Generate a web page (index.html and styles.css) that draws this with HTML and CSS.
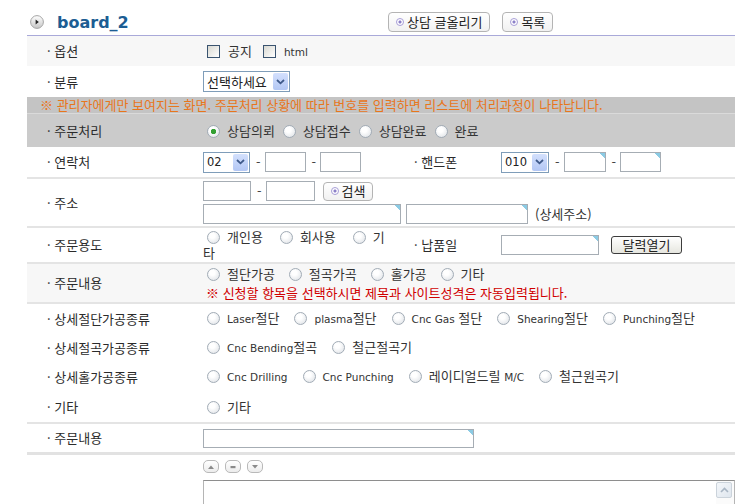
FILE: index.html
```html
<!DOCTYPE html>
<html lang="ko">
<head>
  <meta charset="UTF-8" />
  <title>board_2</title>
  <link rel="stylesheet" href="styles.css">
</head>
<body>
  <div class="board">
    <div class="board-head">
      <h1 class="board-title">
        <svg class="head-icon" width="14" height="14" viewBox="0 0 14 14">
          <defs>
            <linearGradient id="hg" x1="0" y1="0" x2="0" y2="1">
              <stop offset="0" stop-color="#ffffff" />
              <stop offset="1" stop-color="#c6c6c6" />
            </linearGradient>
          </defs>
          <circle cx="7" cy="7" r="6.4" fill="url(#hg)" stroke="#a5a5a5" />
          <path d="M5.6 4.6 L8.8 7 L5.6 9.4 Z" fill="#222" />
        </svg>
        <span class="title-text">board_2</span>
      </h1>
      <div class="head-btns">
        <a class="btn-round"><i class="ring"></i>상담 글올리기</a>
        <a class="btn-round"><i class="ring"></i>목록</a>
      </div>
    </div>

    <div class="row bg-light h30">
      <div class="th">· 옵션</div>
      <div class="td">
        <label class="chk"><input type="checkbox">공지</label>
        <label class="chk"><input type="checkbox"><span class="en">html</span></label>
      </div>
    </div>

    <div class="row h31">
      <div class="th">· 분류</div>
      <div class="td">
        <span class="sel w87"><select><option>선택하세요</option></select><span class="sel-arrow"><svg width="9" height="6" viewBox="0 0 9 6"><path d="M1 1 L4.5 4.3 L8 1" fill="none" stroke="#3f5a8a" stroke-width="1.8" /></svg></span></span>
      </div>
    </div>

    <div class="notice">※ 관리자에게만 보여지는 화면. 주문처리 상황에 따라 번호를 입력하면 리스트에 처리과정이 나타납니다.</div>

    <div class="row bg-dark h33">
      <div class="th">· 주문처리</div>
      <div class="td opts g-status">
        <label class="opt"><input type="radio" name="status" checked>상담의뢰</label><label class="opt"><input type="radio" name="status">상담접수</label><label class="opt"><input type="radio" name="status">상담완료</label><label class="opt"><input type="radio" name="status">완료</label>
      </div>
    </div>

    <div class="row split line h32">
      <div class="th">· 연락처</div>
      <div class="td">
        <span class="sel w47 en"><select><option>02</option></select><span class="sel-arrow"><svg width="9" height="6" viewBox="0 0 9 6"><path d="M1 1 L4.5 4.3 L8 1" fill="none" stroke="#3f5a8a" stroke-width="1.8" /></svg></span></span><span class="dash">-</span><input class="txt w41" type="text"><span class="dash">-</span><input class="txt w41" type="text">
      </div>
      <div class="th">· 핸드폰</div>
      <div class="td">
        <span class="sel w48 en"><select><option>010</option></select><span class="sel-arrow"><svg width="9" height="6" viewBox="0 0 9 6"><path d="M1 1 L4.5 4.3 L8 1" fill="none" stroke="#3f5a8a" stroke-width="1.8" /></svg></span></span><span class="dash">-</span><input class="txt ime w42" type="text"><span class="dash">-</span><input class="txt ime w41" type="text">
      </div>
    </div>

    <div class="row line h49">
      <div class="th">· 주소</div>
      <div class="td addr">
        <div class="addr-line">
          <input class="txt w48" type="text"><span class="dash">-</span><input class="txt w49" type="text">
          <a class="btn-round btn-search"><i class="ring"></i>검색</a>
        </div>
        <div class="addr-line">
          <input class="txt ime w198" type="text"><input class="txt ime w122 ml5" type="text"><span class="addr-note">(상세주소)</span>
        </div>
      </div>
    </div>

    <div class="row split line h36">
      <div class="th">· 주문용도</div>
      <div class="td opts g-usage lh16">
        <label class="opt"><input type="radio" name="usage">개인용</label><label class="opt"><input type="radio" name="usage">회사용</label><label class="opt"><input type="radio" name="usage">기<br>타</label>
      </div>
      <div class="th">· 납품일</div>
      <div class="td">
        <input class="txt ime w98" type="text"><button class="btn-xp" type="button">달력열기</button>
      </div>
    </div>

    <div class="row bg-light line h40">
      <div class="th">· 주문내용</div>
      <div class="td opts g-order lh19">
        <label class="opt"><input type="radio" name="kind">절단가공</label><label class="opt"><input type="radio" name="kind">절곡가곡</label><label class="opt"><input type="radio" name="kind">홀가공</label><label class="opt"><input type="radio" name="kind">기타</label>
        <p class="note-red">※ 신청할 항목을 선택하시면 제목과 사이트성격은 자동입력됩니다.</p>
      </div>
    </div>

    <div class="row h29">
      <div class="th">· 상세절단가공종류</div>
      <div class="td opts g-detail">
        <label class="opt"><input type="radio" name="cut"><span class="en">Laser</span>절단</label><label class="opt"><input type="radio" name="cut"><span class="en">plasma</span>절단</label><label class="opt"><input type="radio" name="cut"><span class="en">Cnc Gas</span> 절단</label><label class="opt"><input type="radio" name="cut"><span class="en">Shearing</span>절단</label><label class="opt"><input type="radio" name="cut"><span class="en">Punching</span>절단</label>
      </div>
    </div>

    <div class="row h29">
      <div class="th">· 상세절곡가공종류</div>
      <div class="td opts g-detail">
        <label class="opt"><input type="radio" name="bend"><span class="en">Cnc Bending</span>절곡</label><label class="opt"><input type="radio" name="bend">철근절곡기</label>
      </div>
    </div>

    <div class="row h29">
      <div class="th">· 상세홀가공종류</div>
      <div class="td opts g-detail">
        <label class="opt"><input type="radio" name="hole"><span class="en">Cnc Drilling</span></label><label class="opt"><input type="radio" name="hole"><span class="en">Cnc Punching</span></label><label class="opt"><input type="radio" name="hole">레이디얼드릴 <span class="en">M/C</span></label><label class="opt"><input type="radio" name="hole">철근원곡기</label>
      </div>
    </div>

    <div class="row line h33">
      <div class="th">· 기타</div>
      <div class="td opts">
        <label class="opt"><input type="radio" name="etc">기타</label>
      </div>
    </div>

    <div class="row line-thick h31">
      <div class="th">· 주문내용</div>
      <div class="td">
        <input class="txt ime w271 h19" type="text">
      </div>
    </div>

    <div class="row editor">
      <div class="th"></div>
      <div class="td">
        <div class="size-btns">
          <span class="size-btn"><svg width="8" height="6" viewBox="0 0 8 6"><path d="M1 5 L4 1.5 L7 5 Z" fill="#8a8a8a" /></svg></span>
          <span class="size-btn"><svg width="8" height="6" viewBox="0 0 8 6"><rect x="1.5" y="2" width="5" height="2.2" fill="#8a8a8a" /></svg></span>
          <span class="size-btn"><svg width="8" height="6" viewBox="0 0 8 6"><path d="M1 1 L4 4.5 L7 1 Z" fill="#8a8a8a" /></svg></span>
        </div>
        <div class="memo">
          <textarea></textarea>
          <div class="scroll">
            <span class="scroll-up"><svg width="9" height="6" viewBox="0 0 9 6"><path d="M1 5 L4.5 1.5 L8 5" fill="none" stroke="#a9b6c4" stroke-width="1.6" /></svg></span>
          </div>
        </div>
      </div>
    </div>
  </div>
</body>
</html>
```

FILE: styles.css
```css
body {
  margin: 0;
  font-family: 'Noto Sans CJK KR', 'Noto Sans', sans-serif;
  font-size: 13px;
  line-height: 16px;
  color: #333;
  background: #fff;
}
.en {
  font-family: 'DejaVu Sans', sans-serif;
  font-size: 10.5px;
}
.board {
  width: 708px;
  margin-left: 27px;
}
.board-head {
  display: flex;
  align-items: center;
  height: 36px;
  padding-top: 8px;
  box-sizing: border-box;
  border-bottom: 1px solid #a9a9d9;
}
.board-title {
  display: flex;
  align-items: center;
  width: 358px;
  margin: 0;
  padding-left: 3px;
  font-family: 'DejaVu Sans', sans-serif;
  font-size: 16px;
  font-weight: bold;
  color: #1c5d93;
}
.title-text {
  padding-top: 3px;
}
.head-icon {
  margin-right: 13px;
}
.head-btns {
  display: flex;
  gap: 12px;
}
.btn-round {
  display: inline-flex;
  align-items: center;
  gap: 3px;
  height: 20px;
  padding: 0 7px 0 7px;
  box-sizing: border-box;
  border: 1px solid #b4b4b4;
  border-radius: 4px;
  background: linear-gradient(#ffffff, #f1f1f1);
  color: #222;
  cursor: pointer;
}
.ring {
  width: 6px;
  height: 6px;
  border: 1px solid #a89ed8;
  border-radius: 50%;
  background: radial-gradient(circle, #8c80c8 0 1.3px, #fff 1.8px);
}
.btn-search {
  height: 19px;
  margin-left: 8px;
}

/* rows */
.row {
  display: grid;
  grid-template-columns: 176px 1fr;
  align-items: center;
  box-sizing: border-box;
}
.row.split {
  grid-template-columns: 176px 191px 107px 1fr;
}
.th {
  padding-left: 20px;
  color: #2b2b2b;
  white-space: nowrap;
}
.td {
  display: flex;
  align-items: center;
}
.bg-light { background: #f7f7f7; }
.bg-dark { background: #cbcbcb; }
.line { border-bottom: 2px solid #e4e4e4; }
.line-thick { border-bottom: 3px solid #e2e2e2; }
.h29 { height: 29px; }
.h30 { height: 30px; }
.h31 { height: 31px; }
.h32 { height: 32px; }
.h33 { height: 33px; }
.h36 { height: 36px; }
.h40 { height: 40px; }
.h49 { height: 49px; }

.notice {
  height: 17px;
  padding-left: 13px;
  box-sizing: border-box;
  background: #c4c4c4;
  border-bottom: 1px solid #dadada;
  color: #e8761c;
  line-height: 16px;
  white-space: nowrap;
}

/* checkbox, radio */
input[type=checkbox] {
  appearance: none;
  width: 13px;
  height: 13px;
  margin: 0 8px 0 4px;
  border: 1px solid #3a5470;
  background: linear-gradient(135deg, #d9d9d2, #ffffff);
  vertical-align: -2px;
}
.chk + .chk input {
  margin-left: 11px;
}
.opts {
  display: block;
}
.opt input[type=radio] {
  appearance: none;
  width: 13px;
  height: 13px;
  margin: 0 7px 0 4px;
  border: 1px solid #a2acb6;
  border-radius: 50%;
  background: radial-gradient(circle at 40% 35%, #ffffff 25%, #dadee3 100%);
  vertical-align: -2px;
}
.opt input[type=radio]:checked {
  background: radial-gradient(circle, #33a033 0 2.4px, transparent 3px),
              radial-gradient(circle at 40% 35%, #ffffff 25%, #dadee3 100%);
}
.g-status .opt + .opt input { margin-left: 8px; }
.g-usage .opt + .opt input { margin-left: 17px; }
.g-order .opt + .opt input { margin-left: 14px; }
.g-detail .opt + .opt input { margin-left: 15px; }
.lh16 { line-height: 16px; }
.lh19 { line-height: 19px; }
.note-red {
  margin: 0;
  padding-left: 3px;
  color: #d00000;
}

/* select, text */
.sel {
  display: inline-flex;
  align-items: center;
  height: 21px;
  padding: 0 1px 0 3px;
  box-sizing: border-box;
  border: 1px solid #7f9db9;
  background: #fff;
}
.sel select {
  flex: 1;
  min-width: 0;
  appearance: none;
  border: none;
  background: transparent;
  padding: 0;
  font: inherit;
  color: #222;
}
.sel.en select {
  font-size: 11.5px;
}
.sel-arrow {
  display: flex;
  align-items: center;
  justify-content: center;
  width: 15px;
  height: 17px;
  border-radius: 2px;
  background: linear-gradient(#d3e0fd, #b3c7f4);
}
.w47 { width: 47px; }
.w48 { width: 48px; }
.w87 { width: 87px; }
.txt {
  height: 20px;
  padding: 0 3px;
  box-sizing: border-box;
  border: 1px solid #a6adb4;
  font: inherit;
  background: #fff;
}
.ime {
  background: linear-gradient(225deg, #8ccbe4 0 4px, #ffffff 4px);
}
.w41 { width: 41px; }
.w42 { width: 42px; }
.w49 { width: 49px; }
.w98 { width: 98px; }
.w122 { width: 122px; }
.w198 { width: 198px; }
.w271 { width: 271px; }
.h19 { height: 19px; }
.ml5 { margin-left: 5px; }
.dash {
  margin: 0 4px 0 6px;
  color: #444;
}
.addr {
  flex-direction: column;
  align-items: flex-start;
}
.addr-line {
  display: flex;
  align-items: center;
}
.addr-line + .addr-line {
  margin-top: 3px;
}
.addr-note {
  margin-left: 7px;
}
.btn-xp {
  width: 71px;
  height: 18px;
  margin-left: 12px;
  padding: 0;
  border: 1px solid #3c3c3c;
  border-radius: 3px;
  background: linear-gradient(#ffffff, #e6e6df);
  font: inherit;
  line-height: 14px;
  color: #222;
}

/* editor */
.editor {
  align-items: start;
  padding-top: 5px;
}
.editor .td {
  flex-direction: column;
  align-items: stretch;
}
.size-btns {
  display: flex;
  gap: 6px;
}
.size-btn {
  display: flex;
  align-items: center;
  justify-content: center;
  width: 16px;
  height: 13px;
  box-sizing: border-box;
  border: 1px solid #b9b9b9;
  border-radius: 5px;
  background: linear-gradient(#ffffff, #ececec);
}
.memo {
  display: flex;
  height: 80px;
  margin-top: 7px;
  border: 1px solid #b5b5b5;
  border-top-color: #8e8e8e;
}
.memo textarea {
  flex: 1;
  border: none;
  resize: none;
  outline: none;
}
.scroll {
  width: 17px;
  padding: 1px 1px 0 0;
  background: #fbfbfb;
}
.scroll-up {
  display: flex;
  align-items: center;
  justify-content: center;
  width: 16px;
  height: 16px;
  box-sizing: border-box;
  border: 1px solid #cbd3db;
  border-radius: 2px;
  background: linear-gradient(135deg, #f4f7fa, #dfe6ee);
}
```
